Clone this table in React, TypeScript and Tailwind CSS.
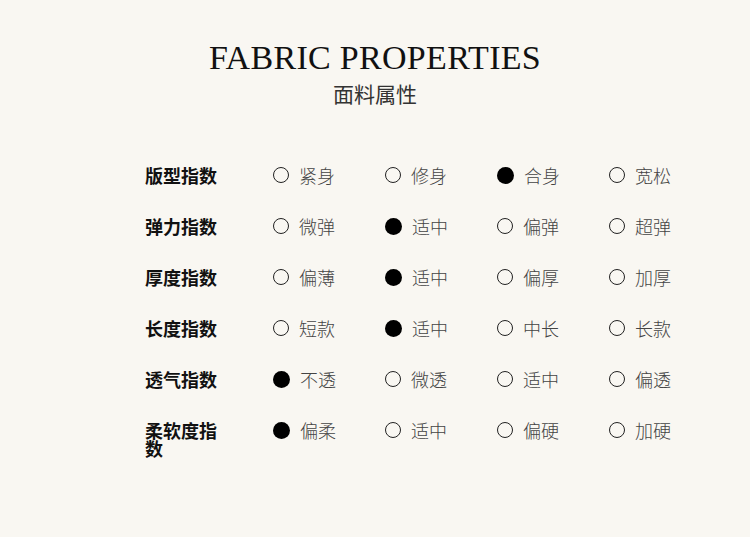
import React from 'react';

type Row = { label: string; options: string[]; selected: number };

const rows: Row[] = [
  { label: '版型指数', options: ['紧身', '修身', '合身', '宽松'], selected: 2 },
  { label: '弹力指数', options: ['微弹', '适中', '偏弹', '超弹'], selected: 1 },
  { label: '厚度指数', options: ['偏薄', '适中', '偏厚', '加厚'], selected: 1 },
  { label: '长度指数', options: ['短款', '适中', '中长', '长款'], selected: 1 },
  { label: '透气指数', options: ['不透', '微透', '适中', '偏透'], selected: 0 },
  { label: '柔软度指数', options: ['偏柔', '适中', '偏硬', '加硬'], selected: 0 },
];

const cjk = "font-['Noto_Sans_CJK_SC',sans-serif]";

const Radio = ({ on }: { on: boolean }) =>
  on ? (
    <span className="block w-[17px] h-[17px] rounded-full bg-black" />
  ) : (
    <span className="block w-[16px] h-[16px] rounded-full border-[1.5px] border-[#222]" />
  );

export default function App() {
  return (
    <div className="min-h-screen w-full bg-[#f9f7f2] pt-[38px]">
      <div className="text-center">
        <h1 className="font-['Liberation_Serif',serif] text-[34px] leading-[40px] text-[#111] tracking-[0.3px]">
          FABRIC PROPERTIES
        </h1>
        <p className={`${cjk} text-[21px] leading-[28px] text-[#333] mt-[1px]`}>面料属性</p>
      </div>

      <div className="pl-[145px] mt-[59px]">
        {rows.map((row) => (
          <div key={row.label} className="flex items-start h-[51px]">
            <div className={`${cjk} w-[78px] mr-[50px] text-[18px] leading-[18px] font-bold text-[#111]`}>
              {row.label}
            </div>
            {row.options.map((opt, i) => (
              <div key={opt + i} className="w-[112px] h-[18px] flex items-center">
                <Radio on={i === row.selected} />
                <span className={`${cjk} ml-[10px] text-[18px] leading-[18px] font-light text-[#444]`}>
                  {opt}
                </span>
              </div>
            ))}
          </div>
        ))}
      </div>
    </div>
  );
}
